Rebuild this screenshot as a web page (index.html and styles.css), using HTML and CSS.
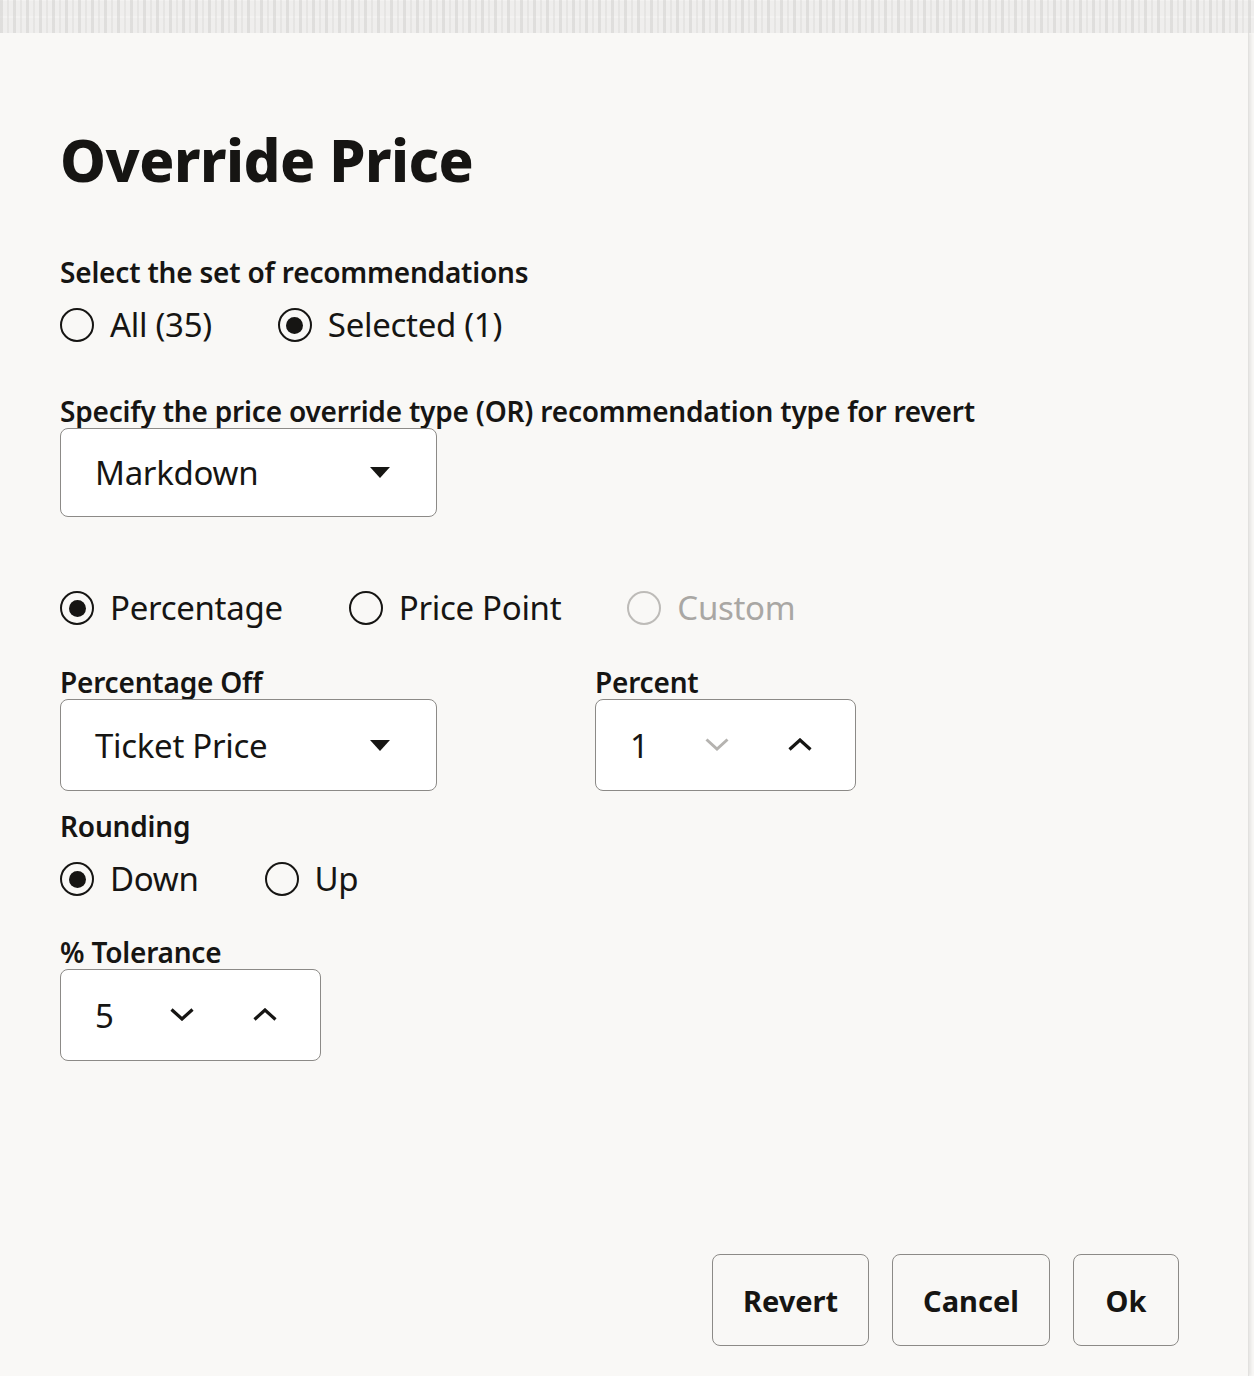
FILE: index.html
```html
<!DOCTYPE html>
<html lang="en">
<head>
<meta charset="utf-8">
<title>Override Price</title>
<link rel="stylesheet" href="styles.css">
</head>
<body>
<div class="backdrop" aria-hidden="true"></div>
<div class="dialog">
  <h1 class="title">Override Price</h1>

  <div class="field field-set">
    <div class="label">Select the set of recommendations</div>
    <div class="radio-row">
      <label class="radio"><span class="dot"></span><span>All (35)</span></label>
      <label class="radio checked"><span class="dot"></span><span>Selected (1)</span></label>
    </div>
  </div>

  <div class="field field-type">
    <div class="label">Specify the price override type (OR) recommendation type for revert</div>
    <div class="select">
      <span>Markdown</span>
      <svg class="caret" width="20" height="11" viewBox="0 0 20 11"><path d="M0 0h20L10 11z" fill="#161513"/></svg>
    </div>
  </div>

  <div class="radio-row row-mode">
    <label class="radio checked"><span class="dot"></span><span>Percentage</span></label>
    <label class="radio"><span class="dot"></span><span>Price Point</span></label>
    <label class="radio disabled"><span class="dot"></span><span>Custom</span></label>
  </div>

  <div class="pair">
    <div class="field">
      <div class="label">Percentage Off</div>
      <div class="select select-tall">
        <span>Ticket Price</span>
        <svg class="caret" width="20" height="11" viewBox="0 0 20 11"><path d="M0 0h20L10 11z" fill="#161513"/></svg>
      </div>
    </div>
    <div class="field">
      <div class="label">Percent</div>
      <div class="spinner">
        <span class="num">1</span>
        <svg class="chev chev-down" width="24" height="13" viewBox="0 0 24 13"><path d="M1.5 1.5L12 11L22.5 1.5" fill="none" stroke="#b5b3b0" stroke-width="3"/></svg>
        <svg class="chev" width="24" height="13" viewBox="0 0 24 13"><path d="M1.5 11.5L12 2L22.5 11.5" fill="none" stroke="#161513" stroke-width="3.2"/></svg>
      </div>
    </div>
  </div>

  <div class="field field-round">
    <div class="label">Rounding</div>
    <div class="radio-row">
      <label class="radio checked"><span class="dot"></span><span>Down</span></label>
      <label class="radio"><span class="dot"></span><span>Up</span></label>
    </div>
  </div>

  <div class="field field-tol">
    <div class="label">% Tolerance</div>
    <div class="spinner">
      <span class="num">5</span>
      <svg class="chev chev-down" width="24" height="13" viewBox="0 0 24 13"><path d="M1.5 1.5L12 11L22.5 1.5" fill="none" stroke="#161513" stroke-width="3.2"/></svg>
      <svg class="chev" width="24" height="13" viewBox="0 0 24 13"><path d="M1.5 11.5L12 2L22.5 11.5" fill="none" stroke="#161513" stroke-width="3.2"/></svg>
    </div>
  </div>

  <div class="actions">
    <button class="btn btn-revert">Revert</button>
    <button class="btn btn-cancel">Cancel</button>
    <button class="btn btn-ok">Ok</button>
  </div>
</div>
</body>
</html>
```

FILE: styles.css
```css
* { box-sizing: border-box; }
html, body { margin: 0; padding: 0; }
body {
  width: 1254px;
  height: 1376px;
  overflow: hidden;
  background: #f9f8f6;
  font-family: "Noto Sans", "Open Sans", sans-serif;
  color: #161513;
}
.backdrop {
  height: 33px;
  background-color: #efeeed;
  background-image:
    repeating-linear-gradient(90deg, rgba(210,209,207,0.55) 0 3px, transparent 3px 7px, rgba(220,219,217,0.5) 7px 9px, transparent 9px 13px),
    repeating-linear-gradient(0deg, transparent 0 4px, rgba(239,238,237,0.7) 4px 6px, transparent 6px 15px, rgba(244,243,242,0.8) 15px 17px);
  filter: blur(0.6px);
}
.dialog {
  width: 1249px;
  height: 1343px;
  border-right: 1px solid #e2e1df;
  box-shadow: 2px 0 3px rgba(0,0,0,0.08);
  padding: 0 0 0 60px;
  display: flex;
  flex-direction: column;
}
.title {
  margin: 95px 0 0 0;
  font-size: 58px;
  line-height: 64px;
  font-weight: 800;
  letter-spacing: -0.5px;
}
.label {
  font-size: 28px;
  font-weight: 600;
  line-height: 34px;
  letter-spacing: -0.2px;
}
.field { display: flex; flex-direction: column; }
.field-set { margin-top: 63px; }
.radio-row {
  display: flex;
  gap: 66px;
  margin-top: 15px;
}
.radio {
  display: flex;
  align-items: center;
  gap: 16px;
  font-size: 33px;
  line-height: 42px;
  letter-spacing: -0.3px;
}
.dot {
  width: 34px;
  height: 34px;
  border-radius: 50%;
  border: 2.5px solid #161513;
  display: flex;
  align-items: center;
  justify-content: center;
  flex: none;
}
.radio.checked .dot::after {
  content: "";
  width: 17px;
  height: 17px;
  border-radius: 50%;
  background: #161513;
}
.radio.disabled { color: #a9a7a4; }
.radio.disabled .dot { border-color: #bdbbb8; }
.field-type { margin-top: 48px; }
.select {
  width: 377px;
  height: 89px;
  background: #fff;
  border: 1.5px solid #8c8a87;
  border-radius: 8px;
  display: flex;
  align-items: center;
  justify-content: space-between;
  padding: 0 46px 0 34px;
  font-size: 33px;
  letter-spacing: -0.3px;
}
.select-tall { height: 92px; }
.row-mode { margin-top: 70px; }
.pair {
  display: flex;
  gap: 158px;
  margin-top: 36px;
}
.spinner {
  width: 261px;
  height: 92px;
  background: #fff;
  border: 1.5px solid #8c8a87;
  border-radius: 8px;
  display: flex;
  align-items: center;
  padding: 0 0 0 34px;
  font-size: 33px;
}
.spinner .num { flex: none; width: 75px; }
.spinner .chev { flex: none; display: block; margin-top: -1px; }
.spinner .chev-down { margin-right: 59px; }
.field-round { margin-top: 18px; }
.field-tol { margin-top: 35px; }
.actions {
  display: flex;
  justify-content: flex-end;
  gap: 23px;
  margin-top: auto;
  padding-right: 69px;
  padding-bottom: 30px;
}
.btn {
  height: 92px;
  background: #f9f8f6;
  border: 1.5px solid #8c8a87;
  border-radius: 8px;
  font-family: inherit;
  font-size: 29px;
  font-weight: 700;
  color: #161513;
  padding: 0;
}
.btn-revert { width: 157px; }
.btn-cancel { width: 158px; }
.btn-ok { width: 106px; }
```
